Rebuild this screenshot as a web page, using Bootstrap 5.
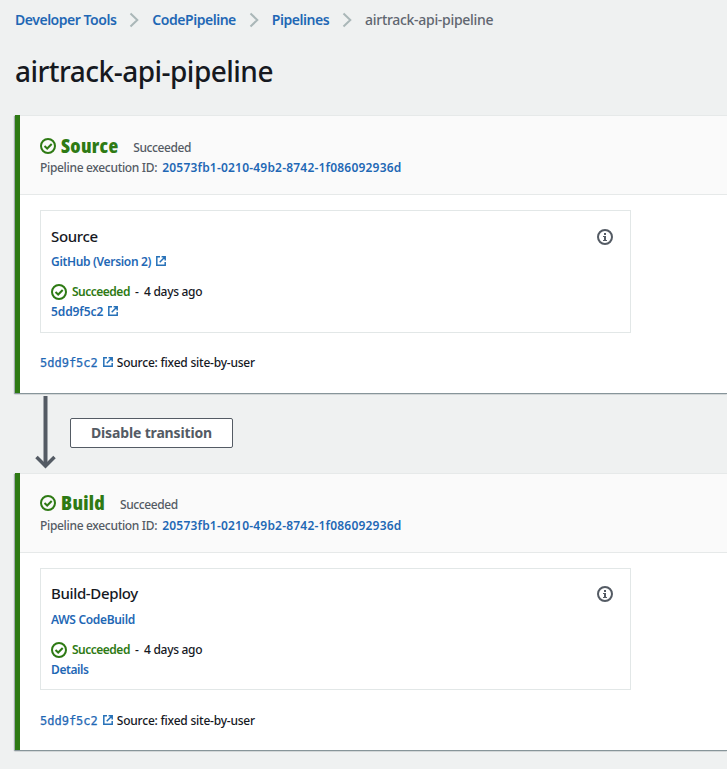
<!DOCTYPE html>
<html lang="en">
<head>
<meta charset="utf-8">
<meta name="viewport" content="width=device-width, initial-scale=1">
<title>airtrack-api-pipeline</title>
<link href="https://cdn.jsdelivr.net/npm/bootstrap@5.3.0/dist/css/bootstrap.min.css" rel="stylesheet">
<style>
  body { background: #eff1f1; color: #16191f; font-family: "Noto Sans", "Open Sans", sans-serif; font-size: 12px; line-height: 20px; padding-bottom: 18px; }
  a { color: #1f68b5; text-decoration: none; font-weight: 600; }
  svg { display: block; flex: none; }
  .crumbs { padding: 10px 0 0 15px; font-size: 14px; height: 40px; letter-spacing: -.47px; }
  .crumbs svg { margin: 0 13px; }
  .crumbs .current { color: #5f6670; font-weight: 500; letter-spacing: -.3px; }
  .page-title { font-size: 28px; line-height: 36px; font-weight: 500; margin: 13px 0 26px 15px; height: 36px; letter-spacing: -.52px; }
  .stage { margin-left: 15px; border: 0; border-left: 5px solid #2e7a14; border-radius: 0; background: #fff; box-shadow: 0 1px 1px #87959a, -1px 1px 1px rgba(0,28,36,.3); height: 278px; }
  .stage-head { background: #fafafa; border-top: 1px solid #e6e9e9; border-bottom: 1px solid #e6e9e9; height: 80px; padding: 16px 0 0 20px; }
  .stage-name { color: #2e7a14; font-family: "Open Sans", "Noto Sans", sans-serif; font-size: 20px; line-height: 28px; font-weight: 800; margin: 0 15px 0 5px; letter-spacing: .25px; font-stretch: 85%; }
  .muted { color: #545b64; font-weight: 500; letter-spacing: -.4px; }
  .stage-status { padding-top: 4px; }
  .exec-row { height: 16px; line-height: 16px; }
  .exec-label { letter-spacing: -.32px; margin-right: 5px; }
  .exec-id { letter-spacing: .2px; }
  .action { border: 1px solid #e2e7e7; width: 591px; height: 123px; margin: 15px 0 0 20px; padding: 16px 17px 0 10px; }
  .action-title { font-size: 15px; line-height: 20px; font-weight: 500; letter-spacing: -.35px; margin-top: -2px; }
  .title-row { height: 20px; }
  .provider { margin: 5px 0 10px; letter-spacing: -.33px; }
  .ok { color: #2e7a14; font-weight: 600; margin: 0 5px; letter-spacing: -.5px; }
  .ago { font-weight: 500; letter-spacing: -.3px; }
  .foot { margin: 20px 0 0 20px; }
  .foot .ago { letter-spacing: -.22px; }
  .ext { margin: 0 4px 2px 5px; }
  .details { letter-spacing: -.4px; }
  .commit { letter-spacing: -.1px; }
  .sha { font-family: "DejaVu Sans Mono", monospace; font-weight: 400; -webkit-text-stroke: .25px #1f68b5; }
  .transition-row { height: 80px; padding-left: 35px; }
  .btn-transition, .btn-transition:hover { border: 1px solid #545b64; border-radius: 2px; background: #fff; color: #545b64; font-size: 14px; font-weight: 700; width: 163px; height: 30px; line-height: 20px; padding: 4px 0; margin-top: 25px; letter-spacing: -.15px; }
  .stage-second { height: 277px; }
  .stage-second .stage-head { padding-top: 15px; }
  .stage-second .exec-row { margin-top: 1px; }
  .stage-second .action { height: 122px; padding-top: 15px; }
  .stage-second .provider { margin-top: 6px; }
  .stage-second .foot { margin-top: 21px; }
</style>
<script src="https://cdn.jsdelivr.net/npm/bootstrap@5.3.0/dist/js/bootstrap.bundle.min.js"></script>
</head>
<body class="text-nowrap">
<svg width="0" height="0" class="position-absolute">
  <symbol id="check" viewBox="0 0 16 16"><circle cx="8" cy="8" r="7" fill="none" stroke="#2e7a14" stroke-width="2"/><path d="M4.500 8l2.700 2.500 4.500-4.500" fill="none" stroke="#2e7a14" stroke-width="2"/></symbol>
  <symbol id="ext" viewBox="0 0 10 10"><path d="M4 .8H.8v8.400h8.400V6M5.600.8h3.600v3.600M9.200.8L3.700 6.300" fill="none" stroke="#2671b8" stroke-width="1.500"/></symbol>
  <symbol id="info" viewBox="0 0 16 16"><circle cx="8" cy="8" r="7" fill="none" stroke="#545b64" stroke-width="2"/><path d="M7 4h2v2H7zM6 7h3v4h1v1H6v-1h1V8H6z" fill="#545b64"/></symbol>
  <symbol id="chev" viewBox="0 0 10 16"><path d="M1.500 1.500L8.300 8l-6.800 6.500" fill="none" stroke="#aab7b8" stroke-width="2"/></symbol>
</svg>

<nav class="crumbs d-flex align-items-start" aria-label="breadcrumb">
  <a href="#">Developer Tools</a><svg width="10" height="20"><use href="#chev"/></svg>
  <a href="#">CodePipeline</a><svg width="10" height="20"><use href="#chev"/></svg>
  <a href="#">Pipelines</a><svg width="10" height="20"><use href="#chev"/></svg>
  <span class="current">airtrack-api-pipeline</span>
</nav>
<h1 class="page-title">airtrack-api-pipeline</h1>

<section class="card stage">
  <div class="stage-head">
    <div class="d-flex align-items-center"><svg width="16" height="16"><use href="#check"/></svg><h2 class="stage-name">Source</h2><span class="muted stage-status">Succeeded</span></div>
    <div class="d-flex exec-row"><span class="muted exec-label">Pipeline execution ID:</span><a href="#" class="exec-id">20573fb1-0210-49b2-8742-1f086092936d</a></div>
  </div>
  <div class="action">
    <div class="title-row d-flex justify-content-between align-items-center"><span class="action-title">Source</span><svg width="16" height="16"><use href="#info"/></svg></div>
    <div class="provider d-flex align-items-center"><a href="#">GitHub (Version 2)</a><svg class="ext" width="10" height="10"><use href="#ext"/></svg></div>
    <div class="d-flex align-items-center"><svg width="16" height="16"><use href="#check"/></svg><span class="ok">Succeeded</span><span class="ago">-&nbsp; 4 days ago</span></div>
    <div class="d-flex align-items-center"><a href="#" class="commit">5dd9f5c2</a><svg class="ext" width="10" height="10"><use href="#ext"/></svg></div>
  </div>
  <div class="foot d-flex align-items-center"><a href="#" class="sha">5dd9f5c2</a><svg class="ext" width="10" height="10"><use href="#ext"/></svg><span class="ago">Source: fixed site-by-user</span></div>
</section>

<div class="transition-row d-flex align-items-start">
  <svg width="35" height="80" viewBox="0 0 35 80"><path d="M10.500 3v69" stroke="#545b64" stroke-width="4"/><path d="M1.500 64l9 9 9-9" fill="none" stroke="#545b64" stroke-width="3.500"/></svg>
  <button type="button" class="btn btn-transition">Disable transition</button>
</div>

<section class="card stage stage-second">
  <div class="stage-head">
    <div class="d-flex align-items-center"><svg width="16" height="16"><use href="#check"/></svg><h2 class="stage-name">Build</h2><span class="muted stage-status">Succeeded</span></div>
    <div class="d-flex exec-row"><span class="muted exec-label">Pipeline execution ID:</span><a href="#" class="exec-id">20573fb1-0210-49b2-8742-1f086092936d</a></div>
  </div>
  <div class="action">
    <div class="title-row d-flex justify-content-between align-items-center"><span class="action-title">Build-Deploy</span><svg width="16" height="16"><use href="#info"/></svg></div>
    <div class="provider"><a href="#">AWS CodeBuild</a></div>
    <div class="d-flex align-items-center"><svg width="16" height="16"><use href="#check"/></svg><span class="ok">Succeeded</span><span class="ago">-&nbsp; 4 days ago</span></div>
    <div><a href="#" class="details">Details</a></div>
  </div>
  <div class="foot d-flex align-items-center"><a href="#" class="sha">5dd9f5c2</a><svg class="ext" width="10" height="10"><use href="#ext"/></svg><span class="ago">Source: fixed site-by-user</span></div>
</section>
</body>
</html>
